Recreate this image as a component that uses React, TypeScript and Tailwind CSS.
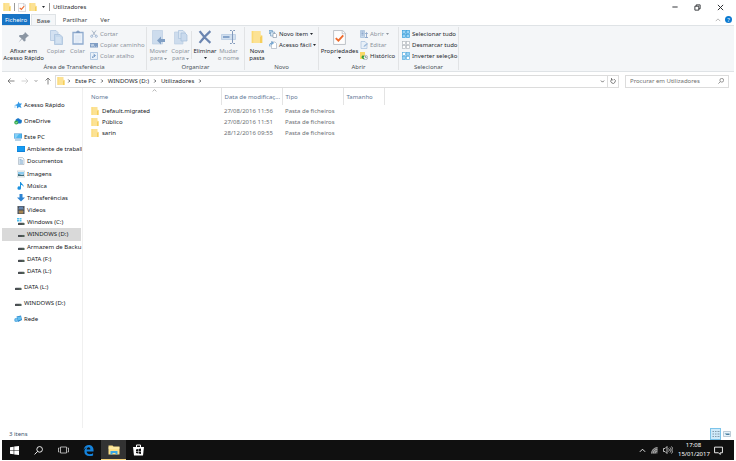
import type { ReactNode } from 'react'
import { clsx } from 'clsx'

interface IconProps {
  className?: string
}

interface SvgProps extends IconProps {
  children: ReactNode
  viewBox?: string
}

function Svg({ className = 'size-2', viewBox = '0 0 16 16', children }: SvgProps) {
  return (
    <svg viewBox={viewBox} className={clsx('shrink-0', className)} fill="none" aria-hidden="true">
      {children}
    </svg>
  )
}

/* ---------- Icons ---------- */

function FolderIcon({ className }: IconProps) {
  return (
    <Svg className={className}>
      <path d="M1 0h12v5l2 1v10H1z" fill="#fce294" />
      <path d="M12 8l3-2v10h-3z" fill="#f6cf5c" />
      <path d="M1 0h2v16H1z" fill="#fbd975" />
    </Svg>
  )
}

function CheckPageIcon({ className }: IconProps) {
  return (
    <Svg className={className} viewBox="0 0 24 28">
      <path d="M1 1h17l5 5v21H1z" fill="#fdfdfd" stroke="#b4b9c0" strokeWidth="1.6" />
      <path d="M17 1v6h6" stroke="#b4b9c0" strokeWidth="1.4" />
      <path d="M5 15l5 5 9-10" stroke="#ee6a2c" strokeWidth="3.4" />
    </Svg>
  )
}

function PinIcon({ className }: IconProps) {
  return (
    <Svg className={className} viewBox="0 0 24 24">
      <path d="M14 2l8 8-3 1-4 4 0 5-3 1-4-5-7 7 6-8-5-4 1-3 6 0 4-3z" fill="#8b96a3" />
    </Svg>
  )
}

function CopyIcon({ className }: IconProps) {
  return (
    <Svg className={className} viewBox="0 0 26 30">
      <path d="M1 1h11l4 4v16H1z" fill="#d3e1f1" stroke="#a9c1dc" strokeWidth="1.4" />
      <path d="M9 9h11l5 5v15H9z" fill="#c5d8ec" stroke="#a3bdda" strokeWidth="1.4" />
      <path d="M12 16h9M12 20h10M12 24h10" stroke="#e8f0f8" strokeWidth="1.5" />
    </Svg>
  )
}

function PasteIcon({ className }: IconProps) {
  return (
    <Svg className={className} viewBox="0 0 24 30">
      <path d="M2 5h20v23H2z" fill="#eaf1f9" stroke="#8fabce" strokeWidth="2.6" />
      <path d="M8 6V3h2l1-2h2l1 2h2v3z" fill="#7f9cc2" />
      <path d="M6 12h12M6 16h12M6 20h12M6 24h8" stroke="#cfdeee" strokeWidth="1.3" />
    </Svg>
  )
}

function ScissorsIcon({ className }: IconProps) {
  return (
    <Svg className={className}>
      <path d="M4 1l7 10M12 1L5 11" stroke="#a3b0c2" strokeWidth="1.8" />
      <circle cx="3.5" cy="12.5" r="2.2" stroke="#8fa9cb" strokeWidth="1.6" />
      <circle cx="12.5" cy="12.5" r="2.2" stroke="#8fa9cb" strokeWidth="1.6" />
    </Svg>
  )
}

function PathIcon({ className }: IconProps) {
  return (
    <Svg className={className}>
      <path d="M0 4h16v9H0z" fill="#7f9dc4" />
      <path d="M2 6l2 5 2-5 2 5M9 11h1M12 11h1" stroke="#e7eff8" strokeWidth="1.3" />
    </Svg>
  )
}

function ShortcutIcon({ className }: IconProps) {
  return (
    <Svg className={className}>
      <path d="M1 1h14v14H1z" fill="#e9f1f9" stroke="#a5bfdd" strokeWidth="1.6" />
      <path d="M5 12c0-4 2-5 5-5M7 4l4 3-4 4" stroke="#6d92c1" strokeWidth="1.7" />
    </Svg>
  )
}

function MoveToIcon({ className }: IconProps) {
  return (
    <Svg className={className} viewBox="0 0 28 30">
      <path d="M1 1h20v27H1z" fill="#cddced" stroke="#bccfe4" strokeWidth="1.4" />
      <path d="M26 18h-8v-5l-8 8 8 8v-5h8z" fill="#809fc5" />
    </Svg>
  )
}

function CopyToIcon({ className }: IconProps) {
  return (
    <Svg className={className} viewBox="0 0 28 30">
      <path d="M1 4h17v24H1z" fill="#cddced" stroke="#bccfe4" strokeWidth="1.4" />
      <path d="M9 1h9l4 4v12H9z" fill="#d9e5f2" stroke="#a9c1dc" strokeWidth="1.4" />
      <path d="M14 6h8l4 4v12H14z" fill="#c9daed" stroke="#a3bdda" strokeWidth="1.4" />
    </Svg>
  )
}

function DeleteIcon({ className }: IconProps) {
  return (
    <Svg className={className} viewBox="0 0 26 26">
      <path d="M3 2c5 7 12 15 20 22M23 2C16 8 9 16 3 24" stroke="#6c86b1" strokeWidth="4.2" />
    </Svg>
  )
}

function RenameIcon({ className }: IconProps) {
  return (
    <Svg className={className} viewBox="0 0 30 28">
      <path d="M1 9h28v10H1z" fill="#d2e0ef" stroke="#b1c7df" strokeWidth="1.4" />
      <path d="M4 12h13v4H4z" fill="#86a4ca" />
      <path d="M18 1h3l2 2 2-2h3M23 3v22M18 27h3l2-2 2 2h3" stroke="#8199bb" strokeWidth="2" />
    </Svg>
  )
}

function NewItemIcon({ className }: IconProps) {
  return (
    <Svg className={className}>
      <path d="M0 1h7v6H0z" fill="#b5d7ef" stroke="#5b8fbc" strokeWidth="1.2" />
      <path d="M3 4h8v8H3z" fill="#d7e9f6" stroke="#6d93b8" strokeWidth="1.2" />
      <path d="M8 7h5l2 2v6H8z" fill="#fff" stroke="#7d8da0" strokeWidth="1.2" />
    </Svg>
  )
}

function EasyAccessIcon({ className }: IconProps) {
  return (
    <Svg className={className}>
      <path d="M5 2h7l3 3v10H5z" fill="#fff" stroke="#9aa6b5" strokeWidth="1.2" />
      <path d="M2 11C0 6 3 4 7 4M5 1l4 3-4 3" stroke="#3a85c6" strokeWidth="1.6" />
    </Svg>
  )
}

function OpenIcon({ className }: IconProps) {
  return (
    <Svg className={className}>
      <path d="M1 1h8v14H1z" fill="#c6d8ec" stroke="#9eb9d9" strokeWidth="1.3" />
      <path d="M3 4h4M3 7h4M3 10h4" stroke="#7897c0" strokeWidth="1.4" />
      <path d="M13 15V6M10.5 8L13 5l2.5 3M10 15h6" stroke="#7e9cc4" strokeWidth="1.6" />
    </Svg>
  )
}

function EditIcon({ className }: IconProps) {
  return (
    <Svg className={className}>
      <path d="M2 1h8l4 4v10H2z" fill="#e8f0f8" stroke="#a6bfdc" strokeWidth="1.4" />
      <path d="M7 12l1-3 6-5 2 2-6 5z" fill="#9fbbdb" />
    </Svg>
  )
}

function HistoryIcon({ className }: IconProps) {
  return (
    <Svg className={className}>
      <path d="M0 0h10v14H0z" fill="#f8d767" />
      <circle cx="11" cy="11" r="4.3" fill="#f3f6f3" stroke="#8c959c" strokeWidth="1.3" />
      <path d="M11 8v3h2.5" stroke="#5c666e" strokeWidth="1.2" />
      <path d="M2 11l4-5 3 4H7c0 2 1 3 2 4-3 1-5-1-5-3z" fill="#2ba13c" />
    </Svg>
  )
}

interface SelectIconProps extends IconProps {
  fills: string[]
  stroke: string
}

function SelectIcon({ className, fills, stroke }: SelectIconProps) {
  const spots = [
    [1, 1],
    [9, 1],
    [1, 9],
    [9, 9],
  ]
  return (
    <Svg className={className}>
      {spots.map(([x, y], i) => (
        <rect key={i} x={x} y={y} width="6" height="6" fill={fills[i]} stroke={stroke} strokeWidth="1.4" />
      ))}
    </Svg>
  )
}

function DriveIcon({ className, system = false }: IconProps & { system?: boolean }) {
  return (
    <Svg className={className}>
      {system && <path d="M0 0h4v3H0zM5 0h4v3H5zM0 4h4v3H0zM5 4h4v3H5z" fill="#4fc0f2" />}
      <path d="M4 8h9l2 2H2z" fill="#d2d4d6" />
      <path d="M2 10h13v4H2z" fill="#4b4f53" />
      <path d="M11 11.5h2v1h-2z" fill="#6fdc6a" />
    </Svg>
  )
}

function StarIcon({ className }: IconProps) {
  return (
    <Svg className={className}>
      <path d="M9 1l2 4 5 0-3 4 2 5-5-2-4 3 0-5-4-2 5-2z" fill="#3399e6" />
      <path d="M0 12h5M1 9h3" stroke="#7cc0ef" strokeWidth="1.3" />
    </Svg>
  )
}

function OneDriveIcon({ className }: IconProps) {
  return (
    <Svg className={className}>
      <path d="M4 9a3 3 0 0 1 1-5 4 4 0 0 1 7 1 3 3 0 0 1 3 5 2 2 0 0 1-2 3H7z" fill="#1976c8" />
      <circle cx="4.5" cy="11" r="4" fill="#2eac47" />
      <path d="M2.5 11l1.5 1.5L7 9.5" stroke="#fff" strokeWidth="1.3" />
    </Svg>
  )
}

function PcIcon({ className }: IconProps) {
  return (
    <Svg className={className}>
      <path d="M0 1h16v10H0z" fill="#3f8fd0" />
      <path d="M1 2h14v8H1z" fill="#4fb7ef" />
      <path d="M1 2h9L4 10H1z" fill="#85d0f6" />
      <path d="M2 13h12v2H2z" fill="#6aa5cf" />
    </Svg>
  )
}

function DesktopIcon({ className }: IconProps) {
  return (
    <Svg className={className}>
      <path d="M0 2h16v12H0z" fill="#1181d8" />
      <path d="M1 3h14v9H1z" fill="#159bf2" />
    </Svg>
  )
}

function DocumentIcon({ className }: IconProps) {
  return (
    <Svg className={className}>
      <path d="M3 1h8l3 3v11H3z" fill="#f1f6fa" stroke="#9cabb8" strokeWidth="1.2" />
      <path d="M5 5h4M5 7.5h7M5 10h7M5 12.5h7" stroke="#5e97c4" strokeWidth="1.2" />
    </Svg>
  )
}

function ImageIcon({ className }: IconProps) {
  return (
    <Svg className={className}>
      <path d="M0 2h16v12H0z" fill="#f4f7f8" stroke="#aab4bb" />
      <path d="M2 4h12v5H2z" fill="#8ccbf0" />
      <path d="M2 12V8l4 1 4 1 4-1v3z" fill="#3d6d7b" />
    </Svg>
  )
}

function MusicIcon({ className }: IconProps) {
  return (
    <Svg className={className}>
      <path d="M6 0h2c0 4 6 4 5 10-1-3-3-4-5-4v6a3.5 3.5 0 1 1-2-3z" fill="#1c92e0" />
    </Svg>
  )
}

function DownloadIcon({ className }: IconProps) {
  return (
    <Svg className={className}>
      <path d="M5 0h6v7h5l-8 8-8-8h5z" fill="#2c83d2" />
    </Svg>
  )
}

function VideoIcon({ className }: IconProps) {
  return (
    <Svg className={className}>
      <path d="M1 0h14v16H1z" fill="#42464d" />
      <path d="M4 1h8v6H4z" fill="#6484ae" />
      <path d="M4 9h8v6H4z" fill="#a68550" />
      <path d="M2.5 1v14M13.5 1v14" stroke="#c4c8cc" strokeWidth="1" strokeDasharray="1.5 1.5" />
    </Svg>
  )
}

function NetworkIcon({ className }: IconProps) {
  return (
    <Svg className={className}>
      <path d="M5 3l9-2 2 9-8 4z" fill="#2b86c9" />
      <path d="M6 4l8-1 0 6-6 2z" fill="#62bff0" />
      <circle cx="4.5" cy="10" r="4" fill="#3e9fdd" />
      <path d="M1 10h7M4.5 6.5v7" stroke="#b5e0f8" />
    </Svg>
  )
}

interface StrokeIconProps extends IconProps {
  d: string
  weight?: string
}

function StrokeIcon({ className, d, weight = '1.6' }: StrokeIconProps) {
  return (
    <Svg className={className}>
      <path d={d} stroke="currentColor" strokeWidth={weight} />
    </Svg>
  )
}

const CHEVRON_DOWN = 'M3 5l5 5 5-5'
const CHEVRON_UP = 'M2 11l6-6 6 6'
const CHEVRON_RIGHT = 'M5 2l6 6-6 6'

/* ---------- Ribbon ---------- */

interface RibbonButtonProps {
  icon: ReactNode
  lines: string[]
  width: string
  muted?: boolean
  arrow?: boolean
}

function Caret() {
  return (
    <svg viewBox="0 0 6 4" className="inline-block h-[2px] w-[3px] shrink-0" aria-hidden="true">
      <path d="M0 0h6L3 4z" fill="currentColor" />
    </svg>
  )
}

function BigButton({ icon, lines, width, muted = false, arrow = false }: RibbonButtonProps) {
  const last = lines.length - 1
  return (
    <button
      type="button"
      className={clsx('flex h-9 shrink-0 flex-col items-center whitespace-nowrap', width, muted ? 'text-[#8d949d]' : 'text-[#24282e]')}
    >
      <span className="mb-px flex h-5 items-center">{icon}</span>
      {lines.map((line, i) => (
        <span key={line} className="flex h-[7px] items-center gap-px leading-[7px]">
          {line}
          {arrow && last > 0 && i === last && <Caret />}
        </span>
      ))}
      {arrow && last === 0 && (
        <span className="flex h-[5px] items-center">
          <Caret />
        </span>
      )}
    </button>
  )
}

interface SmallButtonProps {
  icon: ReactNode
  label: string
  muted?: boolean
  arrow?: boolean
}

function SmallButton({ icon, label, muted = false, arrow = false }: SmallButtonProps) {
  return (
    <button
      type="button"
      className={clsx('flex h-[11px] items-center gap-0.5 whitespace-nowrap', muted ? 'text-[#8d949d]' : 'text-[#24282e]')}
    >
      {icon}
      {label}
      {arrow && <Caret />}
    </button>
  )
}

function RibbonGroup({ label, width, children }: { label: string; width: string; children: ReactNode }) {
  return (
    <section aria-label={label} className={clsx('my-px flex shrink-0 flex-col border-r border-[#e1e3e5]', width)}>
      <div className="flex h-9 shrink-0">{children}</div>
      <div className="text-center leading-2 text-[#4c535b]">{label}</div>
    </section>
  )
}

function Ribbon() {
  return (
    <div className="flex h-[47px] overflow-hidden border-y border-[#dfe3e6] bg-[#f4f6f8]">
      <RibbonGroup label="Área de Transferência" width="w-[145px]">
        <BigButton icon={<PinIcon className="size-3" />} lines={['Afixar em', 'Acesso Rápido']} width="w-[43px]" />
        <BigButton icon={<CopyIcon className="h-[15px] w-[13px]" />} lines={['Copiar']} width="w-[22px]" muted />
        <BigButton icon={<PasteIcon className="h-[15px] w-3" />} lines={['Colar']} width="w-[21px]" muted />
        <div className="ml-0.5 flex flex-col pt-px">
          <SmallButton icon={<ScissorsIcon />} label="Cortar" muted />
          <SmallButton icon={<PathIcon />} label="Copiar caminho" muted />
          <SmallButton icon={<ShortcutIcon />} label="Colar atalho" muted />
        </div>
      </RibbonGroup>
      <RibbonGroup label="Organizar" width="w-[98px]">
        <BigButton icon={<MoveToIcon className="h-[15px] w-[14px]" />} lines={['Mover', 'para']} width="w-[23px]" muted arrow />
        <BigButton icon={<CopyToIcon className="h-[15px] w-[14px]" />} lines={['Copiar', 'para']} width="w-[21px]" muted arrow />
        <div className="my-1 w-px bg-[#e1e3e5]" />
        <BigButton icon={<DeleteIcon className="size-[14px]" />} lines={['Eliminar']} width="w-[26px]" arrow />
        <BigButton icon={<RenameIcon className="h-[14px] w-[15px]" />} lines={['Mudar', 'o nome']} width="w-[21px]" muted />
      </RibbonGroup>
      <RibbonGroup label="Novo" width="w-[74px]">
        <BigButton icon={<FolderIcon className="h-[14px] w-3" />} lines={['Nova', 'pasta']} width="w-[24px]" />
        <div className="flex flex-col pt-px">
          <SmallButton icon={<NewItemIcon />} label="Novo item" arrow />
          <SmallButton icon={<EasyAccessIcon />} label="Acesso fácil" arrow />
        </div>
      </RibbonGroup>
      <RibbonGroup label="Abrir" width="w-[80px]">
        <BigButton icon={<CheckPageIcon className="h-[15px] w-[13px]" />} lines={['Propriedades']} width="w-[41px]" arrow />
        <div className="flex flex-col pt-px">
          <SmallButton icon={<OpenIcon />} label="Abrir" muted arrow />
          <SmallButton icon={<EditIcon />} label="Editar" muted />
          <SmallButton icon={<HistoryIcon />} label="Histórico" />
        </div>
      </RibbonGroup>
      <RibbonGroup label="Selecionar" width="w-[60px]">
        <div className="ml-[3px] flex flex-col pt-px">
          <SmallButton
            icon={<SelectIcon fills={['#9bd4f5', '#9bd4f5', '#9bd4f5', '#9bd4f5']} stroke="#3aa0dc" />}
            label="Selecionar tudo"
          />
          <SmallButton icon={<SelectIcon fills={['#fff', '#fff', '#fff', '#fff']} stroke="#b4babf" />} label="Desmarcar tudo" />
          <SmallButton
            icon={<SelectIcon fills={['#fff', '#9bd4f5', '#9bd4f5', '#fff']} stroke="#5aaee0" />}
            label="Inverter seleção"
          />
        </div>
      </RibbonGroup>
    </div>
  )
}

/* ---------- Window chrome ---------- */

function TitleBar() {
  return (
    <header className="flex h-[14px] items-center text-[#26292d]">
      <div className="flex flex-1 items-center gap-[3px] pl-px">
        <FolderIcon />
        <span className="h-2 w-px bg-[#9a9a9a]" />
        <button type="button" aria-label="Propriedades">
          <CheckPageIcon className="h-[9px] w-2" />
        </button>
        <button type="button" aria-label="Nova pasta">
          <FolderIcon />
        </button>
        <button type="button" aria-label="Personalizar" className="flex w-1.5 justify-center">
          <Caret />
        </button>
        <span className="h-2 w-px bg-[#9a9a9a]" />
        <h1>Utilizadores</h1>
      </div>
      <div className="flex items-center gap-4 pr-2.5">
        <button type="button" aria-label="Minimizar">
          <StrokeIcon className="size-1.5" d="M1 8h14" weight="2.5" />
        </button>
        <button type="button" aria-label="Restaurar">
          <StrokeIcon className="size-[7px]" d="M2 5h9v9H2zM5 5V2h9v9h-3" weight="2" />
        </button>
        <button type="button" aria-label="Fechar">
          <StrokeIcon className="size-[7px]" d="M2 2l12 12M14 2L2 14" weight="2.2" />
        </button>
      </div>
    </header>
  )
}

function Tabs() {
  return (
    <nav className="flex h-[11px] items-center text-[#3a3e44]">
      <button type="button" className="h-full w-7 bg-[#1874c5] text-white">
        Ficheiro
      </button>
      <button type="button" className="-mb-px ml-px h-3 w-[25px] border-x border-t border-[#dfe3e6] bg-[#f4f6f8]">
        Base
      </button>
      <button type="button" className="w-[38px]">
        Partilhar
      </button>
      <button type="button" className="w-[22px]">
        Ver
      </button>
      <div className="ml-auto flex items-center gap-1 pr-0.5">
        <button type="button" aria-label="Minimizar friso" className="text-[#8a8a8a]">
          <StrokeIcon className="size-1.5" d={CHEVRON_UP} />
        </button>
        <button type="button" aria-label="Ajuda" className="grid size-[7px] place-items-center rounded-full bg-[#0b79d0] text-white">
          ?
        </button>
      </div>
    </nav>
  )
}

function AddressBar() {
  const crumbs = ['Este PC', 'WINDOWS (D:)', 'Utilizadores']
  return (
    <div className="mt-0.5 flex h-[14px] items-center text-[#26292d]">
      <div className="flex w-[53px] shrink-0 items-center justify-between pr-[3px] pl-[5px] text-[#666]">
        <button type="button" aria-label="Retroceder">
          <StrokeIcon d="M15 8H2M7 3L2 8l5 5" />
        </button>
        <button type="button" aria-label="Avançar" className="text-[#c6c6c6]">
          <StrokeIcon d="M1 8h13M9 3l5 5-5 5" />
        </button>
        <button type="button" aria-label="Localizações recentes">
          <StrokeIcon className="size-1" d={CHEVRON_DOWN} weight="3" />
        </button>
        <button type="button" aria-label="Subir">
          <StrokeIcon d="M8 15V2M3 7l5-5 5 5" />
        </button>
      </div>
      <div className="flex h-[13px] flex-1 items-center border border-[#dcdcdc] pl-px">
        <FolderIcon />
        <StrokeIcon className="mx-0.5 size-1" d={CHEVRON_RIGHT} weight="3" />
        {crumbs.map((crumb) => (
          <span key={crumb} className="flex items-center">
            <a href="#" className="px-0.5">
              {crumb}
            </a>
            <StrokeIcon className="mx-0.5 size-1" d={CHEVRON_RIGHT} weight="3" />
          </span>
        ))}
        <button type="button" aria-label="Localizações anteriores" className="mr-0.5 ml-auto text-[#555]">
          <StrokeIcon className="size-[5px]" d={CHEVRON_DOWN} weight="2.6" />
        </button>
        <button type="button" aria-label="Atualizar" className="grid h-full w-[11px] place-items-center border-l border-[#dcdcdc] text-[#555]">
          <StrokeIcon className="size-1.5" d="M4 4a6 6 0 1 0 7-1M4 0v5h5" weight="2" />
        </button>
      </div>
      <label className="mr-[5px] ml-1.5 flex h-[13px] w-[104px] items-center border border-[#dcdcdc] px-1">
        <input
          type="search"
          aria-label="Procurar em Utilizadores"
          placeholder="Procurar em Utilizadores"
          className="min-w-0 flex-1 bg-transparent outline-none placeholder:text-[#6e6e6e]"
        />
        <span className="text-[#666]">
          <StrokeIcon className="size-1.5" d="M6 10l-5 5M10 1a5 5 0 1 1 0 10 5 5 0 0 1 0-10z" weight="1.8" />
        </span>
      </label>
    </div>
  )
}

/* ---------- Body ---------- */

interface NavItem {
  label: string
  icon: ReactNode
  selected?: boolean
}

const PC_ITEMS: NavItem[] = [
  { label: 'Ambiente de traball', icon: <DesktopIcon /> },
  { label: 'Documentos', icon: <DocumentIcon /> },
  { label: 'Imagens', icon: <ImageIcon /> },
  { label: 'Música', icon: <MusicIcon /> },
  { label: 'Transferências', icon: <DownloadIcon /> },
  { label: 'Vídeos', icon: <VideoIcon /> },
  { label: 'Windows (C:)', icon: <DriveIcon system /> },
  { label: 'WINDOWS (D:)', icon: <DriveIcon />, selected: true },
  { label: 'Armazem de Backu', icon: <DriveIcon /> },
  { label: 'DATA (F:)', icon: <DriveIcon /> },
  { label: 'DATA (L:)', icon: <DriveIcon /> },
]

function NavRow({ item, nested = false }: { item: NavItem; nested?: boolean }) {
  return (
    <a
      href="#"
      className={clsx(
        'flex min-h-3 items-center gap-0.5 whitespace-nowrap',
        nested ? 'pl-[15px]' : 'pl-3',
        item.selected && 'bg-[#d9d9d9]',
      )}
    >
      {item.icon}
      {item.label}
    </a>
  )
}

function Sidebar() {
  return (
    <nav className="flex w-[80px] shrink-0 flex-col gap-1 pt-[11px] pr-px text-[#16191c]">
      <NavRow item={{ label: 'Acesso Rápido', icon: <StarIcon /> }} />
      <NavRow item={{ label: 'OneDrive', icon: <OneDriveIcon /> }} />
      <div className="grid h-[146px] auto-rows-fr grid-cols-1">
        <NavRow item={{ label: 'Este PC', icon: <PcIcon /> }} />
        {PC_ITEMS.map((item) => (
          <NavRow key={item.label} item={item} nested />
        ))}
      </div>
      <NavRow item={{ label: 'DATA (L:)', icon: <DriveIcon /> }} />
      <NavRow item={{ label: 'WINDOWS (D:)', icon: <DriveIcon /> }} />
      <NavRow item={{ label: 'Rede', icon: <NetworkIcon /> }} />
    </nav>
  )
}

const FILES = [
  { name: 'Default.migrated', date: '27/08/2016 11:56' },
  { name: 'Público', date: '27/08/2016 11:51' },
  { name: 'sarin', date: '28/12/2016 09:55' },
]

function FileTable() {
  return (
    <div className="min-w-0 flex-1 border-l border-[#f0f0f0]">
      <table className="w-[301px] table-fixed text-left">
        <thead className="text-[#5f7796]">
          <tr className="h-[17px]">
            <th className="relative w-[138px] border-r border-[#e4e4e4] pl-2 font-normal">
              Nome
              <span className="absolute top-0 left-1/2 text-[#8a8a8a]">
                <StrokeIcon className="size-[5px]" d={CHEVRON_UP} weight="2" />
              </span>
            </th>
            <th className="w-[61px] border-r border-[#e4e4e4] pl-[3px] font-normal whitespace-nowrap">Data de modificaç...</th>
            <th className="w-[61px] border-r border-[#e4e4e4] pl-[3px] font-normal">Tipo</th>
            <th className="w-[41px] border-r border-[#e4e4e4] pl-[3px] font-normal">Tamanho</th>
          </tr>
        </thead>
        <tbody className="text-[#6c7075]">
          {FILES.map((file) => (
            <tr key={file.name} className="h-[11px]">
              <td className="pl-2 text-[#16191c]">
                <span className="flex items-center gap-[3px]">
                  <FolderIcon />
                  {file.name}
                </span>
              </td>
              <td className="pl-[3px]">{file.date}</td>
              <td className="pl-[3px]">Pasta de ficheiros</td>
              <td />
            </tr>
          ))}
        </tbody>
      </table>
    </div>
  )
}

function StatusBar() {
  return (
    <footer className="flex h-3 items-center justify-between pr-0.5 pl-[7px] text-[#3d5470]">
      <span>3 itens</span>
      <div className="flex items-center">
        <button type="button" aria-label="Detalhes" className="grid h-3 w-[11px] place-items-center border border-[#7cc4ea] bg-[#cfeafa]">
          <Svg>
            <path d="M1 3h3M1 8h3M1 13h3M6 3h3M6 8h3M6 13h3M11 3h4M11 8h4M11 13h4" stroke="#6f8798" strokeWidth="1.6" />
          </Svg>
        </button>
        <button type="button" aria-label="Ícones grandes" className="grid h-3 w-[11px] place-items-center">
          <Svg>
            <path d="M1 3h14v10H1z" fill="#e8f3fa" stroke="#a4b9c7" strokeWidth="1.4" />
            <path d="M3 7h10v3H7z" fill="#4a7e9e" />
          </Svg>
        </button>
      </div>
    </footer>
  )
}

function Taskbar() {
  return (
    <footer className="mb-px flex h-5 items-center bg-[#101010] text-white">
      <button type="button" aria-label="Iniciar" className="grid w-6 place-items-center">
        <Svg className="size-[9px]">
          <path d="M0 2.2l6.5-.9v6.2H0zM7.5 1.1L16 0v7.5H7.5zM0 8.5h6.5v6.2L0 13.8zM7.5 8.5H16V16l-8.5-1.1z" fill="#fff" />
        </Svg>
      </button>
      <button type="button" aria-label="Procurar" className="grid w-6 place-items-center">
        <StrokeIcon className="size-[9px]" d="M6.5 9.5L1 15M10 1a5 5 0 1 1 0 10 5 5 0 0 1 0-10z" />
      </button>
      <button type="button" aria-label="Vista de tarefas" className="grid w-[26px] place-items-center">
        <Svg className="h-2 w-[11px]" viewBox="0 0 22 16">
          <path d="M5 2h12v12H5zM3 4H1v8h2M19 4h2v8h-2" stroke="#d4d4d4" strokeWidth="1.6" />
        </Svg>
      </button>
      <button type="button" aria-label="Microsoft Edge" className="grid w-[25px] place-items-center">
        <Svg className="size-[11px]" viewBox="0 0 24 24">
          <path
            d="M1 11C2 4 7 0 13 0c6 0 10 5 10 11v3H8c0 4 3 6 7 6 3 0 5-1 7-2v5c-2 1-5 1-8 1C7 24 3 20 3 14c0-4 2-7 6-9-4 1-6 3-8 6zm7-1h8c0-3-1-5-4-5-2 0-4 2-4 5z"
            fill="#1583dc"
          />
        </Svg>
      </button>
      <button type="button" aria-label="Explorador de Ficheiros" className="grid h-full w-[25px] place-items-center border-b border-[#f2cf75] bg-[#333]">
        <Svg className="h-[10px] w-3" viewBox="0 0 24 20">
          <path d="M1 1h8l2 2h12v16H1z" fill="#fbe08a" />
          <path d="M1 5h22v2H1z" fill="#fdf0b9" />
          <path d="M5 19v-7h14v7h-4v-3H9v3z" fill="#3ba7e4" />
        </Svg>
      </button>
      <button type="button" aria-label="Loja" className="grid w-[25px] place-items-center">
        <Svg className="h-3 w-[11px]" viewBox="0 0 22 24">
          <path d="M7 6V2h8v4" stroke="#fff" strokeWidth="2" />
          <path d="M0 6h22l-2 17H2z" fill="#fff" />
          <path d="M6 11l4-1v4H6zM11 10l5-1v5h-5zM6 15h4v4l-4-1zM11 15h5v5l-5-1z" fill="#101010" />
        </Svg>
      </button>
      <div className="ml-auto flex h-full items-center gap-[5px]">
        <button type="button" aria-label="Mostrar ícones ocultos">
          <StrokeIcon className="size-[7px]" d={CHEVRON_UP} weight="2" />
        </button>
        <button type="button" aria-label="Rede">
          <Svg className="size-[7px]">
            <path d="M1 15A14 14 0 0 1 15 1v14z" fill="#666" />
            <path d="M1 15A14 14 0 0 1 15 1M5 15A10 10 0 0 1 15 5M9 15a6 6 0 0 1 6-6" stroke="#ddd" strokeWidth="1.4" />
          </Svg>
        </button>
        <button type="button" aria-label="Volume">
          <Svg className="h-2 w-[10px]" viewBox="0 0 20 16">
            <path d="M1 5h3l4-4v14l-4-4H1zM11 5c2 2 2 4 0 6M14 3c3 3 3 7 0 10M17 1c4 5 4 9 0 14" stroke="#eee" strokeWidth="1.5" />
          </Svg>
        </button>
        <div className="w-[31px] text-center leading-[9px] whitespace-nowrap">
          <div>17:08</div>
          <div>15/01/2017</div>
        </div>
        <button type="button" aria-label="Centro de ação" className="mr-[11px]">
          <StrokeIcon className="size-[9px]" d="M1 2h14v10h-4v3l-3-3H1z" />
        </button>
      </div>
    </footer>
  )
}

export default function App() {
  return (
    <div className="flex min-h-screen flex-col bg-white px-0.5 font-['Noto_Sans','Open_Sans',sans-serif] text-[6px] leading-2">
      <TitleBar />
      <Tabs />
      <Ribbon />
      <AddressBar />
      <main className="flex flex-1">
        <Sidebar />
        <FileTable />
      </main>
      <StatusBar />
      <Taskbar />
    </div>
  )
}
